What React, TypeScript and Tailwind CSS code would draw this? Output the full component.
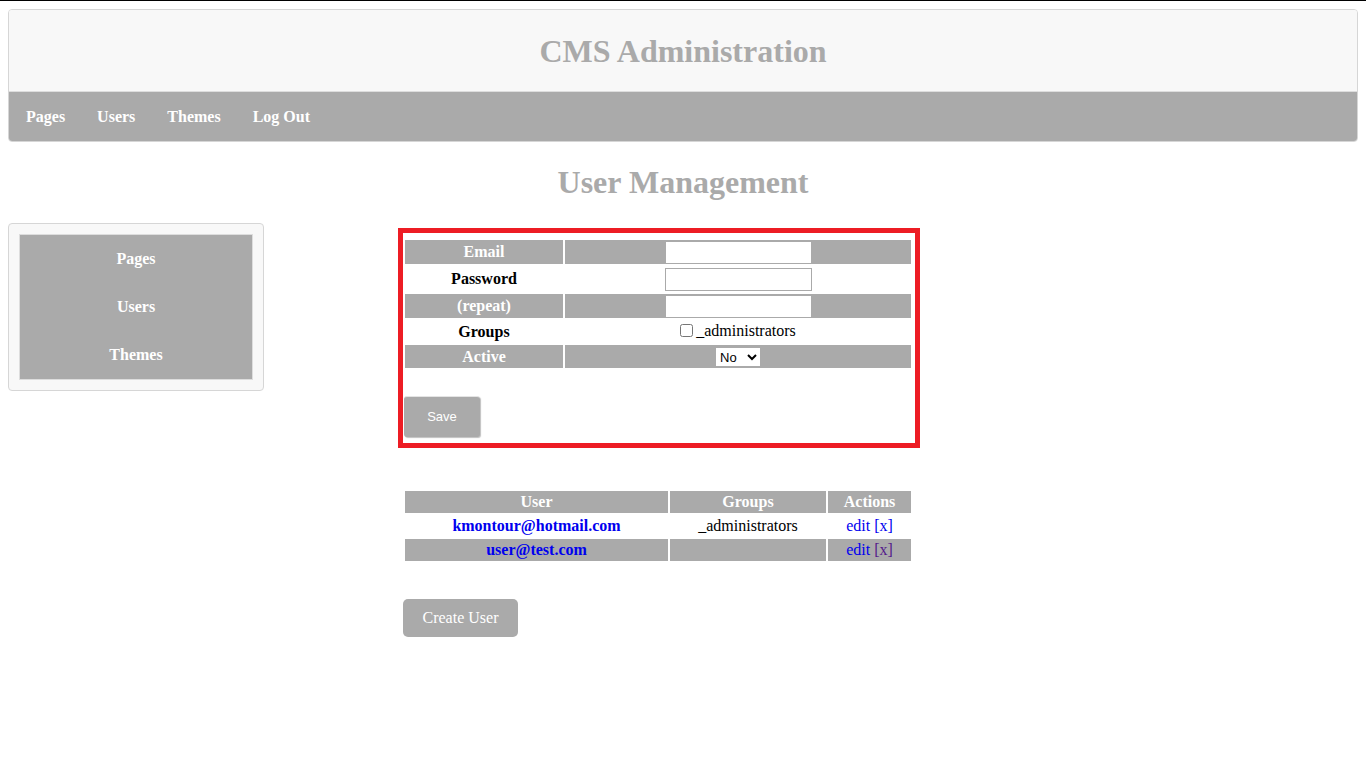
import React, { useState } from 'react';

const navItems = ['Pages', 'Users', 'Themes', 'Log Out'];
const sideItems = ['Pages', 'Users', 'Themes'];

const users = [
  { email: 'kmontour@hotmail.com', groups: '_administrators', visited: false },
  { email: 'user@test.com', groups: '', visited: true },
];

const App: React.FC = () => {
  const [email, setEmail] = useState('');
  const [password, setPassword] = useState('');
  const [repeat, setRepeat] = useState('');
  const [isAdmin, setIsAdmin] = useState(false);
  const [active, setActive] = useState('No');

  const inputClass =
    'w-[147px] h-[23px] px-1 bg-white border border-[#aaaaaa] text-[13px] outline-none align-middle';

  return (
    <div className="min-h-screen bg-white font-['Liberation_Serif',serif] text-base text-black">
      <div className="h-px bg-black" />

      {/* header */}
      <div className="mx-2 mt-2 rounded-[4px] border border-[#d6d6d6] overflow-hidden">
        <div className="h-[82px] bg-[#f8f8f8] flex items-center justify-center border-b border-[#dddddd]">
          <h1 className="text-[32px] font-bold text-[#aaaaaa] leading-none">CMS Administration</h1>
        </div>
        <nav className="h-[49px] bg-[#aaaaaa] flex items-center pl-px">
          {navItems.map((item) => (
            <a key={item} href="#" className="px-4 font-bold text-white">
              {item}
            </a>
          ))}
        </nav>
      </div>

      <h2 className="mt-[22px] text-center text-[32px] font-bold text-[#aaaaaa] leading-[37px]">
        User Management
      </h2>

      <div className="flex px-2 mt-[22px]">
        {/* sidebar */}
        <div className="w-[256px] h-[168px] shrink-0 rounded-[4px] border border-[#d6d6d6] bg-[#f8f8f8] p-[10px]">
          <div className="border border-[#dddddd] bg-[#aaaaaa]">
            {sideItems.map((item) => (
              <a key={item} href="#" className="h-[48px] flex items-center justify-center font-bold text-white">
                {item}
              </a>
            ))}
          </div>
        </div>

        {/* main */}
        <div className="ml-[134px] mt-[5px] leading-[20px]">
          <form
            className="w-[522px] border-[5px] border-[#ed1c24] pt-[5px] pb-[6px]"
            onSubmit={(e) => e.preventDefault()}
          >
            <table className="w-[510px] border-separate border-spacing-[2px]">
              <tbody>
                <tr className="h-[24px]">
                  <th className="w-[158px] bg-[#aaaaaa] text-white p-0">Email</th>
                  <td className="bg-[#aaaaaa] text-center p-0">
                    <input
                      type="text"
                      value={email}
                      onChange={(e) => setEmail(e.target.value)}
                      className={inputClass}
                    />
                  </td>
                </tr>
                <tr className="h-[26px]">
                  <th className="p-0">Password</th>
                  <td className="text-center p-0">
                    <input
                      type="password"
                      value={password}
                      onChange={(e) => setPassword(e.target.value)}
                      className={inputClass}
                    />
                  </td>
                </tr>
                <tr className="h-[24px]">
                  <th className="bg-[#aaaaaa] text-white p-0">(repeat)</th>
                  <td className="bg-[#aaaaaa] text-center p-0">
                    <input
                      type="password"
                      value={repeat}
                      onChange={(e) => setRepeat(e.target.value)}
                      className={inputClass}
                    />
                  </td>
                </tr>
                <tr className="h-[23px]">
                  <th className="p-0">Groups</th>
                  <td className="text-center p-0">
                    <label className="inline-flex items-center gap-[3px]">
                      <input
                        type="checkbox"
                        checked={isAdmin}
                        onChange={(e) => setIsAdmin(e.target.checked)}
                        className="w-[13px] h-[13px] m-0"
                      />
                      <span>_administrators</span>
                    </label>
                  </td>
                </tr>
                <tr className="h-[23px]">
                  <th className="bg-[#aaaaaa] text-white p-0">Active</th>
                  <td className="bg-[#aaaaaa] text-center p-0">
                    <select
                      value={active}
                      onChange={(e) => setActive(e.target.value)}
                      className="w-[46px] h-[20px] bg-white border border-[#aaaaaa] font-['Liberation_Sans',sans-serif] text-[13px] align-middle"
                    >
                      <option>No</option>
                      <option>Yes</option>
                    </select>
                  </td>
                </tr>
              </tbody>
            </table>

            <button
              type="submit"
              className="mt-[26px] ml-px w-[76px] h-[41px] rounded-[3px] bg-[#aaaaaa] border-t border-[#e4e4e4] shadow-[1px_1px_1px_rgba(0,0,0,0.25)] font-['Liberation_Sans',sans-serif] text-[13px] text-white"
            >
              Save
            </button>
          </form>

          <table className="mt-[41px] ml-[5px] w-[510px] border-separate border-spacing-[2px]">
            <thead>
              <tr className="h-[22px]">
                <th className="w-[263px] bg-[#aaaaaa] text-white p-0">User</th>
                <th className="w-[156px] bg-[#aaaaaa] text-white p-0">Groups</th>
                <th className="w-[83px] bg-[#aaaaaa] text-white p-0">Actions</th>
              </tr>
            </thead>
            <tbody>
              {users.map((u, i) => {
                const rowBg = i % 2 === 1 ? 'bg-[#aaaaaa]' : '';
                return (
                  <tr key={u.email} className="h-[22px]">
                    <td className={`${rowBg} text-center font-bold p-0`}>
                      <a href="#" className="text-[#0000ee]">
                        {u.email}
                      </a>
                    </td>
                    <td className={`${rowBg} text-center p-0`}>{u.groups}</td>
                    <td className={`${rowBg} text-center p-0`}>
                      <a href="#" className="text-[#0000ee]">
                        edit
                      </a>{' '}
                      <a href="#" className={u.visited ? 'text-[#551a8b]' : 'text-[#0000ee]'}>
                        [x]
                      </a>
                    </td>
                  </tr>
                );
              })}
            </tbody>
          </table>

          <button
            type="button"
            className="mt-[36px] ml-[5px] w-[115px] h-[38px] rounded-[5px] bg-[#aaaaaa] text-white leading-normal"
          >
            Create User
          </button>
        </div>
      </div>
    </div>
  );
};

export default App;
